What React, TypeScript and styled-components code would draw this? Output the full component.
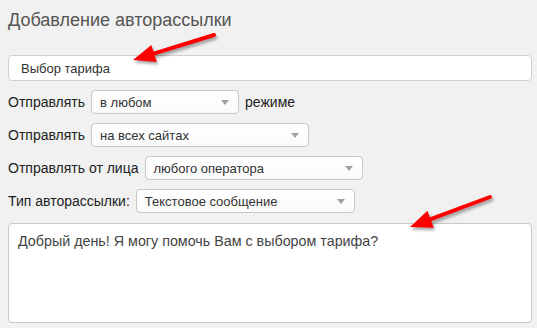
import styled, { createGlobalStyle } from 'styled-components';

const Global = createGlobalStyle`
  html, body {
    margin: 0;
    padding: 0;
    background: #f1f1f1;
  }
  body {
    font-family: 'Liberation Sans', Arial, sans-serif;
    color: #333;
  }
`;

const Page = styled.div`
  position: relative;
  width: 537px;
  height: 328px;
  padding: 0 5px 0 8px;
  box-sizing: border-box;
  overflow: hidden;
`;

const Title = styled.h2`
  margin: 0;
  padding-top: 10px;
  font-size: 18px;
  font-weight: normal;
  line-height: 20px;
  color: #555;
`;

const NameInput = styled.div`
  margin-top: 25px;
  height: 26px;
  box-sizing: border-box;
  border: 1px solid #cfcfcf;
  border-radius: 4px;
  background: #fff;
  padding: 0 12px;
  display: flex;
  align-items: center;
  font-size: 13px;
  color: #333;
`;

const Rows = styled.div`
  margin-top: 9px;
  display: flex;
  flex-direction: column;
  gap: 9px;
`;

const Row = styled.div`
  display: flex;
  align-items: center;
  gap: 6px;
  height: 24px;
  font-size: 14px;
  color: #222;
`;

const Select = styled.div<{ $w: number }>`
  width: ${(p) => p.$w}px;
  height: 24px;
  box-sizing: border-box;
  border: 1px solid #c8c8c8;
  border-radius: 4px;
  background: linear-gradient(#fff, #fafafa);
  display: flex;
  align-items: center;
  justify-content: space-between;
  padding: 0 8px 0 8px;
  font-size: 13px;
  color: #333;

  &::after {
    content: '';
    border-left: 4px solid transparent;
    border-right: 4px solid transparent;
    border-top: 5px solid #a0a0a0;
    margin-right: 1px;
  }
`;

const Message = styled.div`
  margin-top: 10px;
  height: 100px;
  box-sizing: border-box;
  border: 1px solid #c8c8c8;
  border-radius: 4px;
  background: #fff;
  padding: 9px 9px;
  font-size: 14.3px;
  color: #444;
`;

const Arrows = styled.svg`
  position: absolute;
  left: 0;
  top: 0;
  pointer-events: none;
`;

function Arrow({ x1, y1, x2, y2 }: { x1: number; y1: number; x2: number; y2: number }) {
  const dx = x2 - x1;
  const dy = y2 - y1;
  const len = Math.hypot(dx, dy);
  const ux = dx / len;
  const uy = dy / len;
  const head = 22;
  const half = 9;
  const bx = x2 - ux * head;
  const by = y2 - uy * head;
  const px = -uy;
  const py = ux;
  const pts = `${x2},${y2} ${bx + px * half},${by + py * half} ${bx - px * half},${by - py * half}`;
  return (
    <g>
      <g opacity={0.35} transform="translate(1.5,2.5)" filter="url(#blur)">
        <line x1={x1} y1={y1} x2={bx} y2={by} stroke="#000" strokeWidth={4} strokeLinecap="round" />
        <polygon points={pts} fill="#000" />
      </g>
      <line x1={x1} y1={y1} x2={bx + ux * 2} y2={by + uy * 2} stroke="#f00" strokeWidth={4} strokeLinecap="round" />
      <polygon points={pts} fill="#f00" />
    </g>
  );
}

export default function App() {
  return (
    <Page>
      <Global />
      <Title>Добавление авторассылки</Title>
      <NameInput>Выбор тарифа</NameInput>
      <Rows>
        <Row>
          Отправлять <Select $w={148}>в любом</Select> режиме
        </Row>
        <Row>
          Отправлять <Select $w={218}>на всех сайтах</Select>
        </Row>
        <Row>
          Отправлять от лица <Select $w={218}>любого оператора</Select>
        </Row>
        <Row>
          Тип авторассылки: <Select $w={219}>Текстовое сообщение</Select>
        </Row>
      </Rows>
      <Message>Добрый день! Я могу помочь Вам с выбором тарифа?</Message>
      <Arrows width={537} height={328}>
        <defs>
          <filter id="blur">
            <feGaussianBlur stdDeviation="1.5" />
          </filter>
        </defs>
        <Arrow x1={214} y1={35} x2={133} y2={60} />
        <Arrow x1={490} y1={197} x2={410} y2={227} />
      </Arrows>
    </Page>
  );
}
